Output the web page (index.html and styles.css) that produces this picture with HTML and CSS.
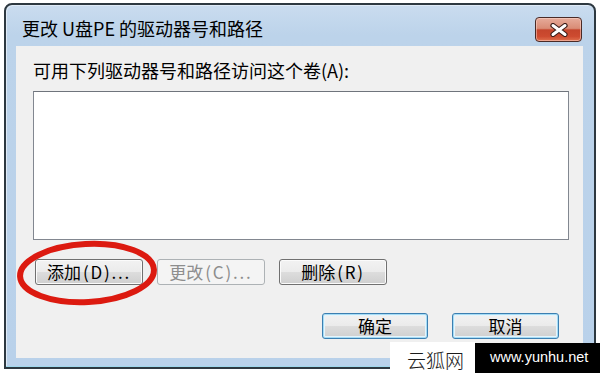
FILE: index.html
```html
<!DOCTYPE html>
<html lang="zh-CN">
<head>
<meta charset="utf-8">
<title>更改 U盘PE 的驱动器号和路径</title>
<link rel="stylesheet" href="styles.css">
</head>
<body>
<div class="window">
  <div class="titlebar">
    <span class="title">更改 U盘PE 的驱动器号和路径</span>
    <button class="close" aria-label="关闭">
      <svg width="20" height="14" viewBox="0 0 20 14">
        <path d="M4 2.5 L16 11.5 M16 2.5 L4 11.5" stroke="#3a1c18" stroke-width="5.2" stroke-linecap="round" fill="none"/>
        <path d="M4 2.5 L16 11.5 M16 2.5 L4 11.5" stroke="#ffffff" stroke-width="3" stroke-linecap="round" fill="none"/>
      </svg>
    </button>
  </div>
  <div class="content">
    <div class="label">可用下列驱动器号和路径访问这个卷(A):</div>
    <div class="listbox"></div>
    <div class="actions">
      <button class="btn">添加<span class="accel">(D)...</span></button>
      <button class="btn" disabled>更改<span class="accel">(C)...</span></button>
      <button class="btn">删除<span class="accel">(R)</span></button>
    </div>
    <div class="footer">
      <button class="btn default btn-ok">确定</button>
      <button class="btn default btn-cancel">取消</button>
    </div>
    <svg class="highlight" width="150" height="72" viewBox="0 0 150 72">
      <ellipse cx="75" cy="36" rx="67" ry="29" fill="none" stroke="#dc1a10" stroke-width="6" transform="rotate(-3 75 36)"/>
    </svg>
  </div>
</div>
<div class="watermark">
  <span class="wm-cn">云狐网</span>
  <span class="wm-url">www.yunhu.net</span>
</div>
</body>
</html>
```
FILE: styles.css
```css
* { box-sizing: border-box; }
html, body { margin: 0; padding: 0; }
body {
  width: 600px;
  height: 373px;
  overflow: hidden;
  position: relative;
  background: #ffffff;
  font-family: "Noto Sans CJK SC", "Liberation Sans", sans-serif;
}

.window {
  margin: 3px 0 0 4px;
  width: 592px;
  height: 366px;
  border: 2px solid #2d3840;
  border-radius: 8px 8px 0 0;
  background: linear-gradient(#cadcef 0px, #bcd3ea 30px, #b9d1ea 100%);
  box-shadow: inset 0 -1px 0 #9fd7ec, inset 1px 1px 0 #dfeaf6;
  padding: 0 11px 9px 10px;
  display: flex;
  flex-direction: column;
}

.titlebar {
  height: 41px;
  display: flex;
  align-items: flex-start;
  justify-content: space-between;
  padding-left: 6px;
}
.title {
  margin-top: 13px;
  font-size: 18px;
  line-height: 20px;
  color: #000;
}
.close {
  margin-top: 12px;
  margin-right: 1px;
  width: 47px;
  height: 25px;
  padding: 0;
  border: 1px solid #4a2a26;
  border-radius: 4px;
  background: linear-gradient(#e6ab9a 0%, #d98c76 45%, #c5452c 52%, #cd4b30 80%, #e0704d 100%);
  box-shadow: inset 0 0 0 1px rgba(255, 220, 210, 0.5);
  display: flex;
  align-items: center;
  justify-content: center;
}
.close svg { display: block; }

.content {
  flex: 1;
  position: relative;
  background: #f0f0f0;
  padding: 14px 14px 0 17px;
}

.label {
  font-size: 18px;
  line-height: 20px;
  color: #000;
  margin-bottom: 11px;
}

.listbox {
  height: 149px;
  background: #ffffff;
  border: 1px solid #828790;
  border-top-color: #6f747c;
}

.actions {
  margin-top: 19px;
  padding-left: 2px;
  display: flex;
  gap: 14px;
}
.actions .btn { width: 108px; }

.footer {
  margin-top: 28px;
  padding-right: 10px;
  display: flex;
  justify-content: flex-end;
  gap: 24px;
}
.btn-ok { width: 106px; }
.btn-cancel { width: 107px; }

.btn {
  height: 26px;
  padding: 0;
  border: 1px solid #707070;
  border-radius: 3px;
  background: linear-gradient(#f2f2f2 0%, #ebebeb 50%, #dddddd 50%, #cfcfcf 100%);
  box-shadow: inset 0 0 0 1px #fbfbfb;
  font-family: "Noto Sans CJK SC", "Liberation Sans", sans-serif;
  font-size: 17px;
  line-height: 22px;
  color: #000;
  display: flex;
  align-items: center;
  justify-content: center;
}
.accel {
  letter-spacing: 1.8px;
  margin-left: 2px;
}
.btn:disabled {
  border-color: #adb2b5;
  background: #f4f4f4;
  box-shadow: none;
  color: #8d8d8d;
}
.btn.default {
  border-color: #3c7fb1;
  box-shadow: inset 0 0 0 1px #a6dcf5, inset 0 0 0 2px #e6f4fb;
}

.highlight {
  position: absolute;
  left: -4px;
  top: 191px;
  overflow: visible;
}

.watermark {
  position: absolute;
  left: 390px;
  top: 342px;
  display: flex;
  align-items: flex-start;
}
.wm-cn {
  width: 85px;
  height: 31px;
  background: #ffffff;
  color: #1a1a1a;
  font-family: "Noto Sans CJK SC", sans-serif;
  font-weight: 300;
  font-size: 19px;
  line-height: 31px;
  padding: 2px 0 0 17px;
}
.wm-url {
  margin-top: 1px;
  width: 125px;
  height: 30px;
  background: #000000;
  color: #ffffff;
  font-family: "Liberation Sans", sans-serif;
  font-size: 14.5px;
  line-height: 28px;
  padding-left: 15px;
}
```
